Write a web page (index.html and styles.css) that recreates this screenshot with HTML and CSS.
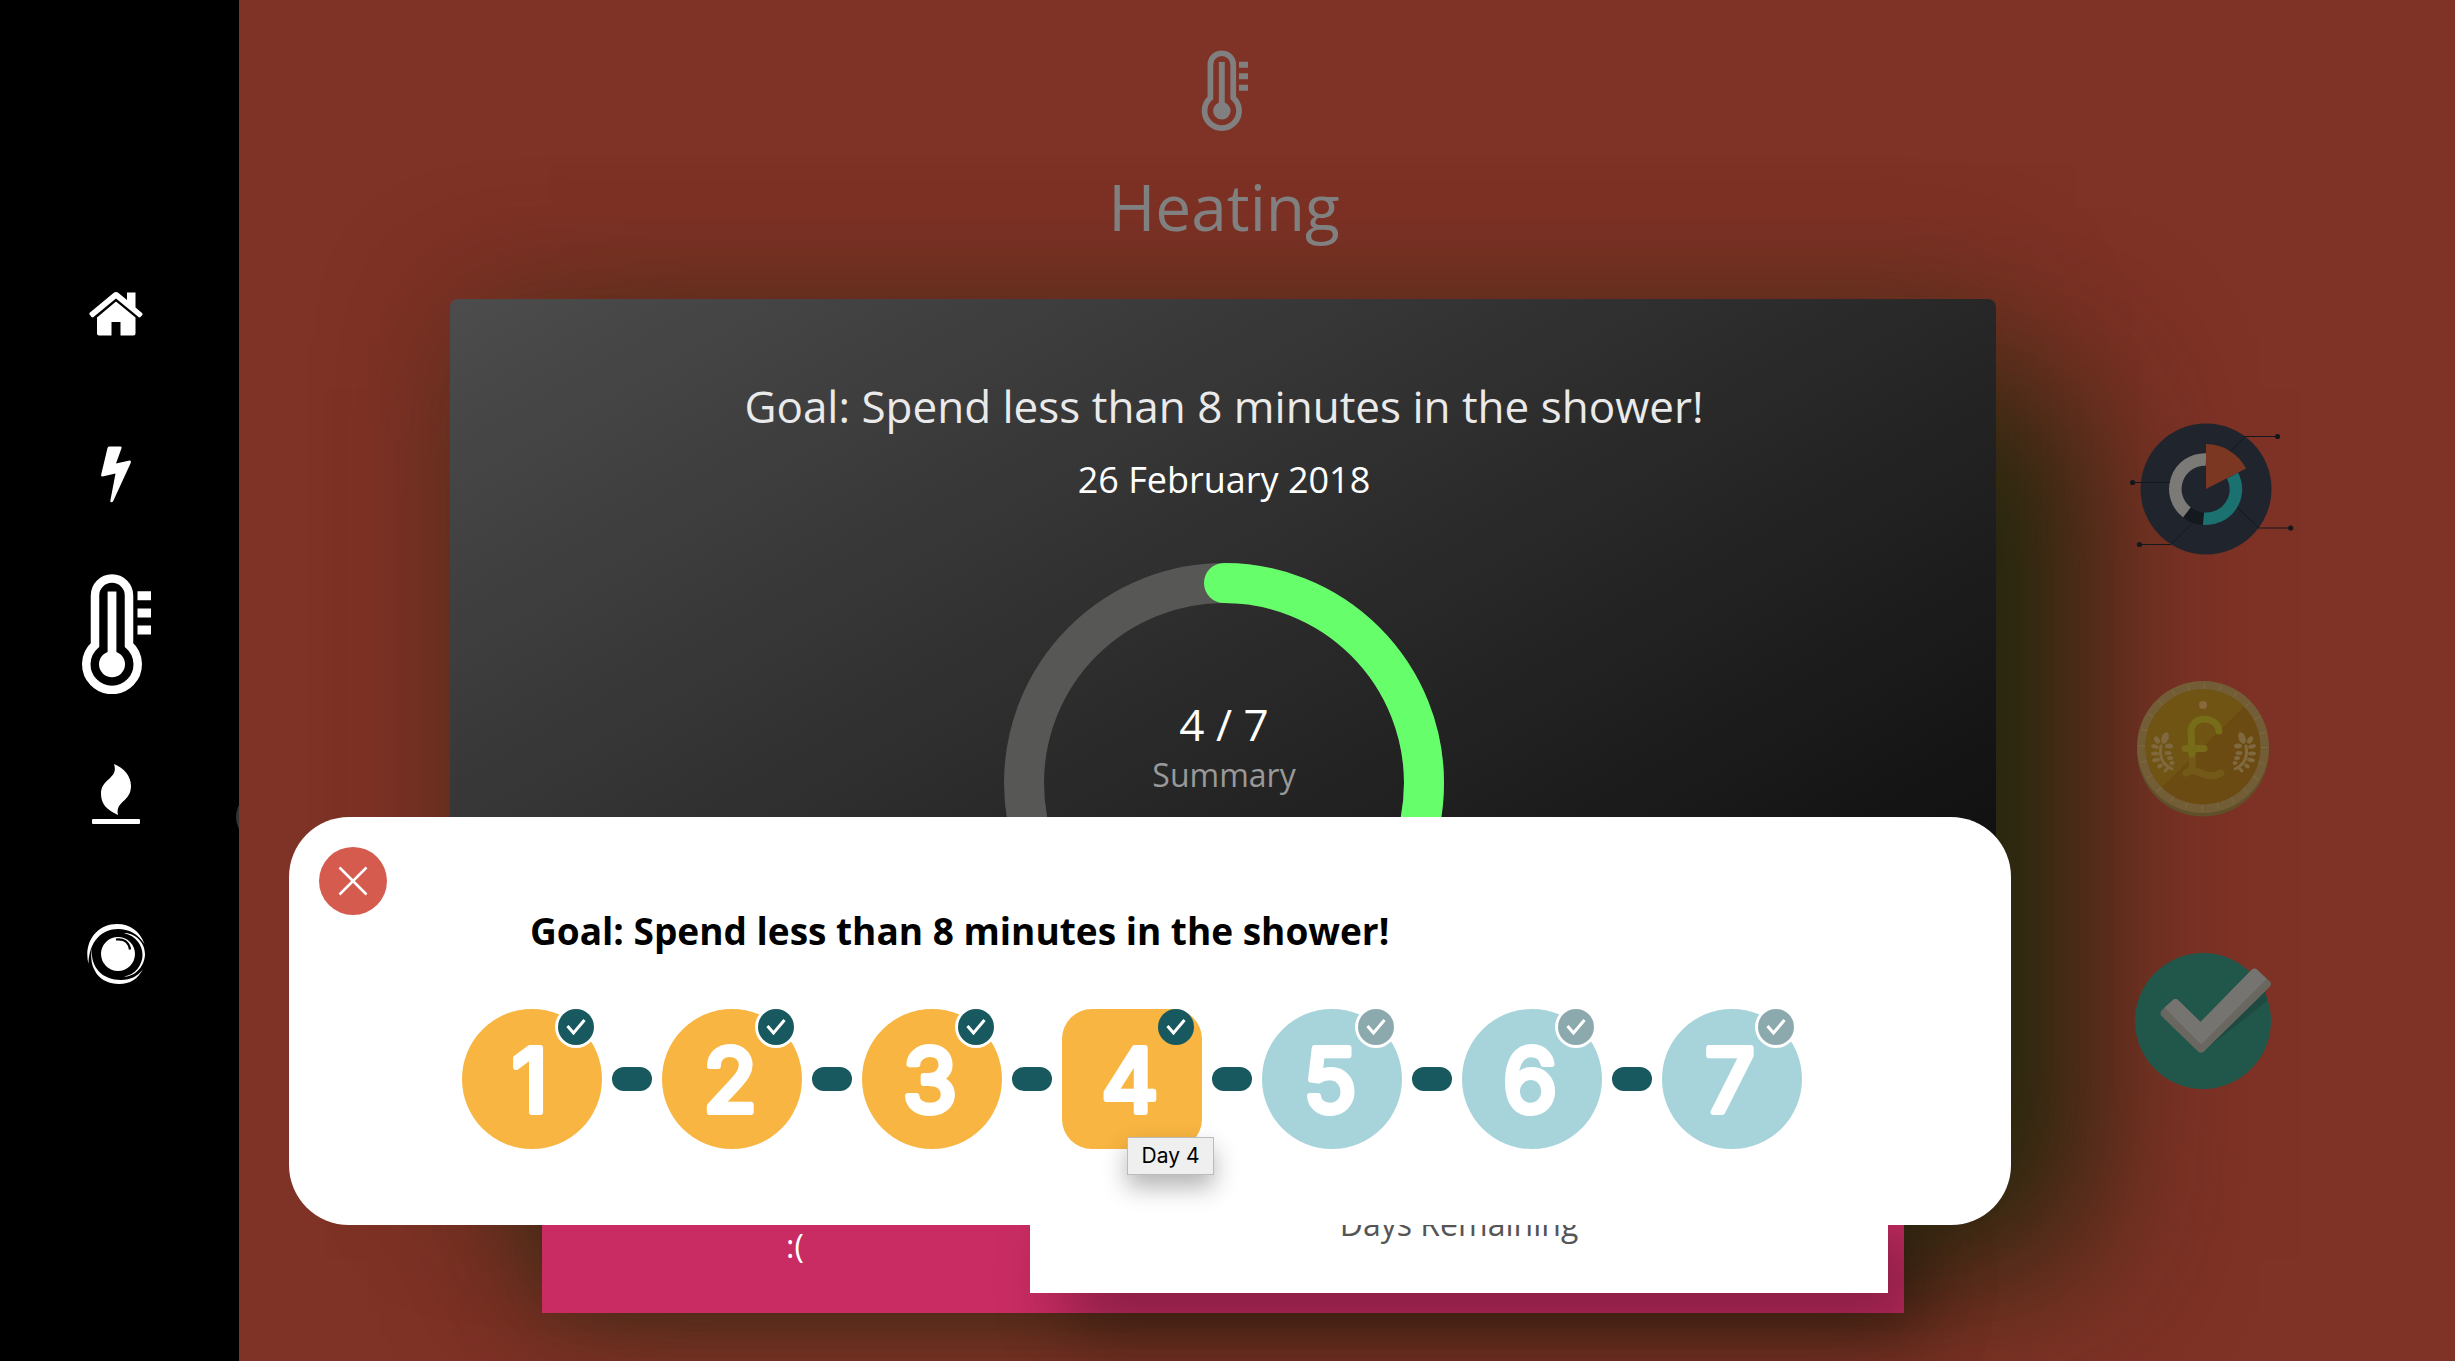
FILE: index.html
```html
<!DOCTYPE html>
<html lang="en">
<head>
<meta charset="utf-8">
<title>Heating</title>
<link rel="stylesheet" href="styles.css">
</head>
<body>
<svg class="defs" aria-hidden="true">
  <symbol id="thermo" viewBox="-1 0 70 120">
    <path d="M13 71V21.500a17 17 0 0 1 34 0V71a25.700 25.700 0 1 1-34 0z" fill="none" stroke="currentColor" stroke-width="8.500"/>
    <path d="M30 17.500V90" stroke="currentColor" stroke-width="8.800"/>
    <circle cx="30" cy="90.300" r="13" fill="currentColor"/>
    <path d="M55.500 17.200h13.500v9h-13.500zM55.500 34.400h13.500v9h-13.500zM55.500 51.500h13.500v9h-13.500z" fill="currentColor"/>
  </symbol>
  <symbol id="tick" viewBox="0 0 42 42">
    <circle cx="21" cy="21" r="21" fill="var(--ring)"/>
    <circle cx="21" cy="21" r="18" fill="currentColor"/>
    <path d="M12.500 20l6 7 11-13" fill="none" stroke="#fff" stroke-width="3"/>
  </symbol>
</svg>

<nav class="sidebar" aria-label="Sections">
  <a href="#home" aria-label="Home"><svg width="54" height="44" viewBox="0 0 54 44"><path d="M27 9.500L46.500 25.500V41.500a2 2 0 0 1-2 2H31.500V30H22.500V43.500H10a2 2 0 0 1-2-2V25.500zM1 20.500L24.500 1a4 4 0 0 1 5 0l8.500 7V.5h8.500V15.500l6.500 5.500q1 1 .3 2l-1.800 2q-1 .8-2 0L27 6.500 4.500 25q-1 .8-2 0L.6 22.600q-.9-1 .4-2.100z" fill="currentColor"/></svg></a>
  <a href="#power" aria-label="Electricity"><svg width="30" height="57" viewBox="0 0 30 57"><path d="M8 .5h11.500q1.500.2 1 1.700L15 17.500 28.500 14.500q2 0 1.200 2.500L12 55.500q-1.300 1.500-2.800 0L14.500 27.500 1.500 30.500Q-.2 30.500.2 28.500L6.500 2q.4-1.300 1.500-1.500z" fill="currentColor"/></svg></a>
  <a href="#heating" aria-label="Heating" aria-current="page"><svg width="70" height="120"><use href="#thermo"/></svg></a>
  <a href="#gas" aria-label="Gas"><svg width="48" height="60" viewBox="0 0 48 60"><path d="M22 0C32 4 39 12 39 22 39 38 23 37 26 51 15 46 9 40 9 30 9 14 27 15 22 0zM1 55H47q1 0 1 1v3q0 1-1 1H1q-1 0-1-1v-3q0-1 1-1z" fill="currentColor"/></svg></a>
  <a href="#usage" aria-label="Usage"><svg width="58" height="60" viewBox="0 0 58 60"><g fill="currentColor"><path d="M1.500 40C-4 18 10 0 30 0c13 0 23 7 27.500 20C51 10 42 5 31 5 15 5 2 17 1.500 40z"/><path d="M5 24C3 44 16 56 34 56c10 0 17-4 22-11C51 55 43 60 32 60 13 60 1 45 5 24z"/><path d="M37 9c12 0 21 10 21 21S49 53 37 52.500C48 51 55.500 41 55.500 31S49 12 37 9z"/><circle cx="31" cy="30" r="17"/></g><path d="M29 15.500c8-1 13 3 14 10" fill="none" stroke="#000" stroke-width="2.200"/></svg></a>
</nav>

<main class="page">
  <div class="content">
    <header class="heading">
      <svg width="47" height="81"><use href="#thermo"/></svg>
      <h1>Heating</h1>
    </header>
    <section class="card">
      <h2>Goal: Spend less than 8 minutes in the shower!</h2>
      <p class="date">26 February 2018</p>
      <div class="progress">
        <svg viewBox="0 0 440 440"><circle cx="220" cy="220" r="200" fill="none" stroke="#575755" stroke-width="40"/><circle cx="220" cy="220" r="200" fill="none" stroke="#66ff6b" stroke-width="40" stroke-linecap="round" pathLength="7" stroke-dasharray="4 3" transform="rotate(-90 220 220)"/></svg>
        <div class="progress-text"><strong>4 / 7</strong><span>Summary</span></div>
      </div>
    </section>
    <section class="result">
      <p class="mood">:(</p>
      <p class="remaining">Days Remaining</p>
    </section>
  </div>

  <aside class="shortcuts">
    <a href="#stats" aria-label="Statistics"><svg width="164" height="132" viewBox="-1 0 164 132"><circle cx="75" cy="66" r="65.500" fill="#20252d"/><g fill="none" stroke-width="12.500"><path d="M75 36.500A29.500 29.500 0 0 0 56 89.500" stroke="#7b7a77"/><path d="M56 89.500A29.500 29.500 0 0 0 72.500 95.800" stroke="#13191d"/><path d="M72.500 95.600A29.500 29.500 0 0 0 101.500 52.500" stroke="#1b7070"/></g><path d="M75 66V21A45 45 0 0 1 115 45.500z" fill="#7c3723"/><g fill="none" stroke="#12181c" stroke-width="1"><path d="M100 28l14-14.500h32M39 59.500H1M106 84l21.500 21h32M62 99.500l-22 22H8"/></g><g fill="#12181c"><circle cx="146.500" cy="13.500" r="2.600"/><circle cx="1.600" cy="59.500" r="2.600"/><circle cx="159.700" cy="105" r="2.600"/><circle cx="8.500" cy="121.500" r="2.600"/></g></svg></a>
    <a href="#savings" aria-label="Savings"><svg width="160" height="136" viewBox="0 0 160 136"><circle cx="73" cy="69.500" r="66" fill="#60502a"/><circle cx="73" cy="66" r="66" fill="#735d37"/><circle cx="73" cy="66" r="61" fill="none" stroke="#806a42" stroke-width="6" stroke-dasharray="1 15"/><circle cx="73" cy="66" r="57.500" fill="#6b4b12"/><path d="M32 106.500A57 57 0 0 1 114 25.500z" fill="#705414"/><circle cx="73" cy="24" r="4" fill="#8a673c"/>
      <g fill="none" stroke-width="7" stroke-linecap="round" stroke-linejoin="round"><path d="M62 73c1 14 1 15-6 19C67 83 75 102 91 92" stroke="#735918"/><path d="M89 50C88 35 61 33 61 51L62 73" stroke="#776d18"/><path d="M55 67.500H74" stroke="#776a18"/></g>
      <g id="laurel" fill="#80693f"><path d="M31 65C29 76 33 84 42 88" fill="none" stroke="#80693f" stroke-width="3" stroke-linecap="round"/><ellipse cx="35" cy="57" rx="3.500" ry="6" transform="rotate(20 35 57)"/><ellipse cx="27" cy="59" rx="2.500" ry="4" transform="rotate(-35 27 59)"/><ellipse cx="39" cy="65" rx="4" ry="2.500"/><ellipse cx="25" cy="65.500" rx="4" ry="2" transform="rotate(15 25 65.500)"/><ellipse cx="25" cy="72.500" rx="4" ry="2"/><ellipse cx="38" cy="72" rx="3.500" ry="2"/><ellipse cx="26" cy="79" rx="4" ry="2" transform="rotate(-10 26 79)"/><ellipse cx="40" cy="77" rx="3" ry="2"/><ellipse cx="30" cy="85" rx="3" ry="2" transform="rotate(-30 30 85)"/><ellipse cx="42" cy="82" rx="2.500" ry="2"/><ellipse cx="36" cy="89" rx="3" ry="1.600" transform="rotate(-40 36 89)"/></g><use href="#laurel" transform="translate(147 0) scale(-1 1)"/></svg></a>
    <a href="#done" aria-label="Completed goals"><svg width="160" height="136" viewBox="0 0 160 136"><circle cx="73" cy="68" r="68" fill="#21574b"/><path d="M135 39q2 5 2 9L75 97z" fill="#1e4a40"/><path d="M31.500 57.500L43 47q2.500-2 5 0L70.500 69 121.500 17q3-3 6 0L140 28.500q2 2.500 0 5L74 98.500q-3 2.500-6 0L31.500 63q-2-2.500 0-5.500z" fill="#696760"/><path d="M34.500 54.500L43 47q2.500-2 5 0L70.500 69 121.500 17q3-3 6 0L136.500 26 71 91.500z" fill="#757470"/></svg></a>
  </aside>

  <div class="dialog" role="dialog" aria-labelledby="goal-title">
    <button class="close" type="button" aria-label="Close"><svg width="30" height="30" viewBox="0 0 30 30"><path d="M1.500 1.500l27 27M28.500 1.500l-27 27" stroke="#fff" stroke-width="2.500"/></svg></button>
    <h2 id="goal-title">Goal: Spend less than 8 minutes in the shower!</h2>
    <ol class="days">
      <li class="day done"><svg class="number"><text x="68" y="103">1</text></svg><svg class="tick"><use href="#tick"/></svg></li>
      <li class="day done"><svg class="number"><text x="68" y="103">2</text></svg><svg class="tick"><use href="#tick"/></svg></li>
      <li class="day done"><svg class="number"><text x="68" y="103">3</text></svg><svg class="tick"><use href="#tick"/></svg></li>
      <li class="day done today"><svg class="number"><text x="68" y="103">4</text></svg><svg class="tick"><use href="#tick"/></svg><span class="tip" role="tooltip">Day 4</span></li>
      <li class="day"><svg class="number"><text x="68" y="103">5</text></svg><svg class="tick"><use href="#tick"/></svg></li>
      <li class="day"><svg class="number"><text x="68" y="103">6</text></svg><svg class="tick"><use href="#tick"/></svg></li>
      <li class="day"><svg class="number"><text x="68" y="103">7</text></svg><svg class="tick"><use href="#tick"/></svg></li>
    </ol>
  </div>
</main>
</body>
</html>
```
FILE: styles.css
```css
* { box-sizing: border-box; }
body {
  margin: 0;
  display: flex;
  min-height: 100vh;
  overflow: hidden;
  background: #7f3226;
  font-family: "Open Sans", sans-serif;
  color: #fff;
}
h1, h2, p, ol { margin: 0; padding: 0; font-weight: 400; }
svg { display: block; }
.defs { position: absolute; width: 0; height: 0; }

.sidebar {
  flex: none;
  position: relative;
  overflow: hidden;
  width: 239px;
  padding-top: 264px;
  display: flex;
  flex-direction: column;
  gap: 60px;
  background: #000;
}
/* edge of the drawer handle */
.sidebar::after {
  content: "";
  position: absolute;
  top: 792px;
  right: -47px;
  width: 50px;
  height: 50px;
  border-radius: 50%;
  background: #333;
}
.sidebar a {
  height: 100px;
  padding-right: 7px;
  display: flex;
  align-items: center;
  justify-content: center;
  color: #fff;
}

.page {
  flex: 1;
  position: relative;
  display: flex;
  gap: 134px;
  padding: 50px 164px 0 211px;
}
.content { flex: 1; min-width: 0; }
.heading {
  height: 249px;
  padding-left: 2px;
  display: flex;
  flex-direction: column;
  align-items: center;
  color: #808080;
}
.heading h1 { margin-top: 32px; font-size: 64px; line-height: 88px; }

.card {
  height: 890px;
  padding: 76px 0 0 2px;
  border-radius: 8px;
  text-align: center;
  background: linear-gradient(to bottom right, #4c4c4c, #020202);
  box-shadow: 0 0 130px rgba(50, 45, 20, .4), 90px 80px 150px -10px rgba(20, 38, 10, .95);
}
.card h2 { font-size: 44px; line-height: 62px; color: #eaeaea; }
.date { margin-top: 18px; font-size: 36px; line-height: 50px; }
.progress {
  position: relative;
  width: 440px;
  margin: 58px auto 0;
}
.progress-text {
  position: absolute;
  inset: 0;
  padding-top: 130px;
}
.progress strong { display: block; font-size: 44px; line-height: 62px; font-weight: 400; }
.progress span { display: block; font-size: 32px; line-height: 40px; color: #999; }

.result {
  height: 124px;
  margin: 0 92px;
  padding: 0 16px 20px 0;
  display: flex;
  background: #c92c63;
  text-align: center;
  box-shadow: 0 0 80px rgba(40, 40, 18, .5);
}
.mood { width: 488px; padding: 34px 0 0 18px; font-size: 32px; line-height: 46px; }
.remaining {
  flex: 1;
  padding: 12px 0 0;
  background: #fff;
  color: #555;
  font-size: 32px;
  line-height: 46px;
  box-shadow: 36px 40px 70px rgba(0, 0, 0, .33);
}

.shortcuts {
  flex: none;
  position: relative;
  width: 161px;
  padding-top: 373px;
  display: flex;
  flex-direction: column;
}
.shortcuts a:nth-child(2) { margin-top: 126px; }
.shortcuts a:nth-child(3) { margin-top: 136px; }

.dialog {
  position: absolute;
  top: 817px;
  left: 50px;
  right: 444px;
  height: 408px;
  padding: 88px 0 0 173px;
  border-radius: 60px;
  background: #fff;
  color: #000;
}
.close {
  position: absolute;
  top: 30px;
  left: 30px;
  width: 68px;
  height: 68px;
  padding: 0;
  border: 0;
  border-radius: 50%;
  display: grid;
  place-items: center;
  background: #d55b4f;
}
.dialog h2 { padding-left: 68px; font-size: 37px; line-height: 52px; font-weight: 700; }
.days {
  margin-top: 52px;
  display: flex;
  gap: 60px;
  list-style: none;
}
.day {
  --ring: #fff;
  position: relative;
  width: 140px;
  height: 140px;
  border-radius: 50%;
  background: #a6d4da;
}
.done { background: #f8b541; }
.today { --ring: transparent; border-radius: 30px; }
.day + .day::before {
  content: "";
  position: absolute;
  top: 58px;
  left: -50px;
  width: 40px;
  height: 24px;
  border-radius: 12px;
  background: #17595e;
}
.number {
  width: 140px;
  height: 140px;
  fill: #fff;
  stroke: #fff;
  stroke-width: 6px;
  stroke-linejoin: round;
  font-family: Inter, sans-serif;
  font-size: 88px;
  text-anchor: middle;
}
.tick {
  position: absolute;
  top: -3px;
  right: 5px;
  width: 42px;
  height: 42px;
  clip-path: inset(3px 0 0);
  color: #8caaad;
}
.done .tick { color: #17595e; }
.tip {
  position: absolute;
  top: 128px;
  left: 65px;
  z-index: 1;
  width: 87px;
  border: 1px solid #bbb;
  background: #efefef;
  color: #000;
  font-family: Inter, sans-serif;
  font-size: 21px;
  line-height: 36px;
  text-align: center;
  box-shadow: 0 12px 24px rgba(0, 0, 0, .3);
}
```
